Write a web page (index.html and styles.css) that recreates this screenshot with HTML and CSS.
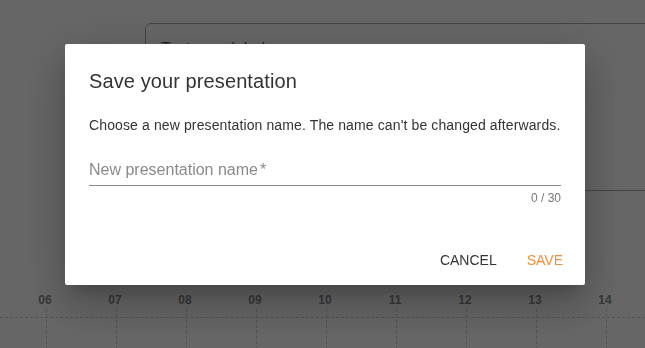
FILE: index.html
```html
<!DOCTYPE html>
<html>
<head>
<meta charset="utf-8">
<link rel="stylesheet" href="styles.css">
</head>
<body>
<div class="page">
  <div class="card">
    <div class="card-text">Text area label</div>
  </div>
  <div class="chart">
    <div class="labels">
      <span>06</span><span>07</span><span>08</span><span>09</span><span>10</span><span>11</span><span>12</span><span>13</span><span>14</span>
    </div>
    <div class="grid">
      <div class="hline"></div>
      <div class="vlines">
        <i></i><i></i><i></i><i></i><i></i><i></i><i></i><i></i><i></i>
      </div>
    </div>
  </div>
</div>
<div class="overlay">
  <div class="dialog">
    <h2 class="title">Save your presentation</h2>
    <p class="desc">Choose a new presentation name. The name can't be changed afterwards.</p>
    <div class="field">
      <div class="input">New presentation name<span class="req">*</span></div>
    </div>
    <div class="hint">0 / 30</div>
    <div class="actions">
      <button class="btn cancel">CANCEL</button>
      <button class="btn save">SAVE</button>
    </div>
  </div>
</div>
</body>
</html>
```
FILE: styles.css
```css
* { box-sizing: border-box; }
html, body { margin: 0; padding: 0; }
body {
  width: 645px;
  height: 348px;
  overflow: hidden;
  background: #fff;
  font-family: "Liberation Sans", Arial, sans-serif;
}
.page {
  padding-top: 23px;
  width: 645px;
  height: 348px;
  overflow: hidden;
}
.card {
  margin-left: 145px;
  margin-right: -10px;
  height: 168px;
  border: 1px solid #aaa;
  border-radius: 6px;
  padding: 16px 15px;
}
.card-text {
  font-size: 16px;
  color: #555;
}
.chart {
  margin-top: 101px;
}
.labels {
  display: flex;
  padding-left: 10px;
}
.labels span {
  flex: none;
  width: 70px;
  text-align: center;
  font-size: 12px;
  font-weight: bold;
  color: #8c8c8c;
  line-height: 16px;
}
.grid {
  padding-top: 1px;
}
.hline {
  margin-top: 8px;
  border-top: 1px dashed #cfcfcf;
}
.vlines {
  display: flex;
  padding-left: 46px;
  margin-top: -9px;
}
.vlines i {
  flex: none;
  display: block;
  width: 70px;
  height: 40px;
  border-left: 1px dashed #cfcfcf;
}
.overlay {
  position: fixed;
  inset: 0;
  background: rgba(0, 0, 0, 0.6);
  padding: 44px 60px 0 65px;
}
.dialog {
  width: 520px;
  height: 241px;
  background: #fff;
  border-radius: 2px;
  padding: 24px 24px 0 24px;
  box-shadow: 0 11px 15px -7px rgba(0,0,0,.2), 0 24px 38px 3px rgba(0,0,0,.14), 0 9px 46px 8px rgba(0,0,0,.12);
}
.title {
  margin: 0 0 21px;
  font-size: 20px;
  font-weight: 400;
  line-height: 26px;
  letter-spacing: 0.1px;
  color: #333;
}
.desc {
  margin: 0 0 25px;
  font-size: 14px;
  line-height: 20px;
  letter-spacing: 0.12px;
  color: #333;
}
.field {
  border-bottom: 1px solid #8a8a8a;
  padding-bottom: 5px;
}
.input {
  font-size: 16px;
  line-height: 20px;
  color: #8a8a8a;
}
.req { margin-left: 2px; }
.hint {
  margin-top: 5px;
  text-align: right;
  font-size: 12px;
  line-height: 14px;
  color: #777;
}
.actions {
  display: flex;
  justify-content: flex-end;
  margin: 37px -18px 0 0;
}
.btn {
  font-family: "Liberation Sans", Arial, sans-serif;
  font-size: 14px;
  height: 36px;
  min-width: 64px;
  padding: 0 16px;
  border: 0;
  background: transparent;
  line-height: 36px;
}
.cancel {
  color: #333;
  margin-right: -2px;
}
.save { color: #f0913a; }
```
